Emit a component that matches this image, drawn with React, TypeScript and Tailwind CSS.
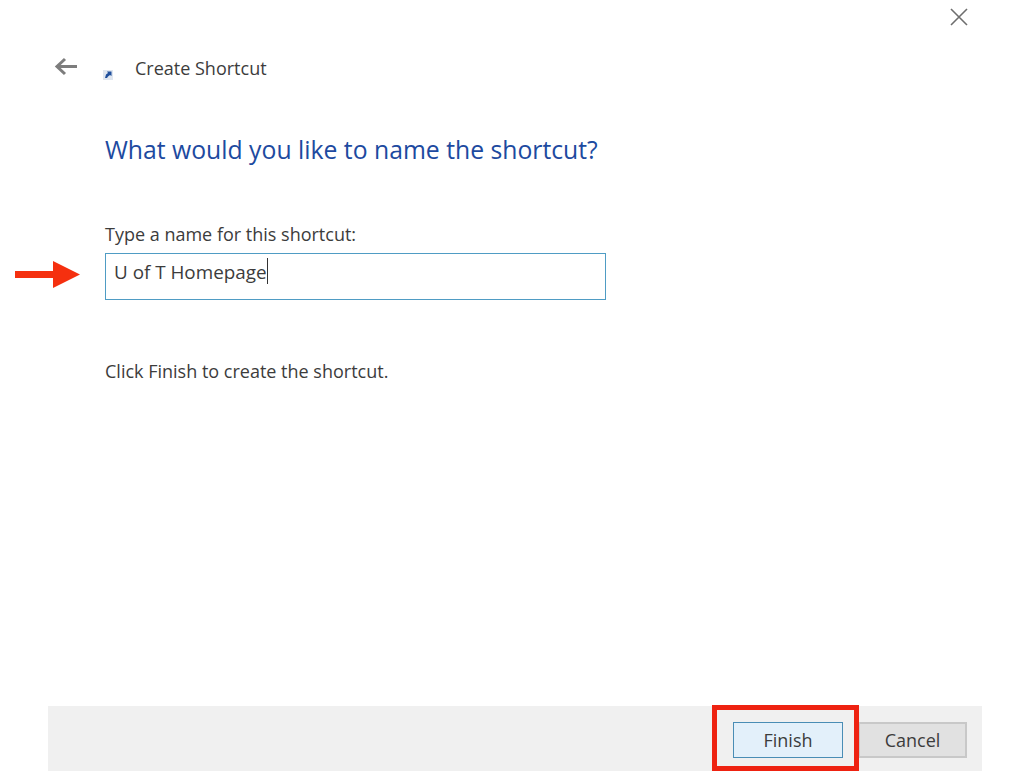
const App = () => {
  return (
    <div className="relative flex h-[782px] w-[1024px] flex-col overflow-hidden bg-white font-['Open_Sans',sans-serif] text-[#3c3c3c]">
      <div className="flex h-[35px] justify-end pr-[55px] pt-[6px]">
        <svg width="20" height="20" viewBox="0 0 20 20" fill="none" stroke="#6e6e6e" strokeWidth="1.6">
          <path d="M2 3 L18 19 M18 3 L2 19" />
        </svg>
      </div>

      <div className="flex h-[66px] items-center pl-[54px]">
        <svg className="mb-[2px]" width="24" height="20" viewBox="0 0 24 20" fill="none" stroke="#7d7d7d" strokeWidth="3">
          <path d="M23 9.5 H3 M11 2 L3 9.5 L11 17" />
        </svg>
        <svg className="ml-[25px] mt-[14px]" width="10" height="10" viewBox="0 0 10 10">
          <rect width="10" height="10" fill="#dfe6f0" />
          <path d="M2 8 L3 4.5 L5 3 L4 1.5 L8.5 1.5 L8.5 6 L7 5 L5 6.5 L4 8 Z" fill="#1f4f9c" />
        </svg>
        <span className="ml-[22px] text-[18px] leading-6">Create Shortcut</span>
      </div>

      <div className="flex flex-1 flex-col pl-[105px]">
        <h1 className="mt-[33px] text-[24.75px] font-normal leading-8 text-[#1d4aa0]">What would you like to name the shortcut?</h1>
        <label className="mt-[56px] text-[18px] leading-6">Type a name for this shortcut:</label>

        <div className="relative mt-[7px] flex h-[47px] w-[501px] items-start border border-[#4f9cc4] pl-2 pt-[6px]">
          <span className="text-[18.85px] leading-6">U of T Homepage</span>
          <span className="mt-[-2px] h-[26px] w-px bg-[#333]" />
          <svg className="absolute left-[-91px] top-[7px]" width="66" height="27" viewBox="0 0 66 27">
            <path d="M0 10 H38 V0 L65 13.5 L38 27 V17 H0 Z" fill="#f5300f" />
          </svg>
        </div>

        <p className="mt-[59px] text-[18px] leading-6">Click Finish to create the shortcut.</p>
      </div>

      <div className="mb-[11px] ml-[48px] mr-[42px] flex h-[65px] items-center justify-end gap-[15px] bg-[#f0f0f0] pr-[15px] pt-[3px]">
        <button className="h-[36px] w-[110px] border border-[#4a8db5] bg-[#e3f0fa] text-[18px] text-[#3c3c3c]">Finish</button>
        <button className="h-[36px] w-[109px] border-2 border-[#c8c8c8] bg-[#e1e1e1] text-[18px] text-[#3c3c3c]">Cancel</button>
      </div>

      <div className="absolute left-[712px] top-[705px] h-[66px] w-[147px] border-[5px] border-[#ee2211]" />
    </div>
  );
};

export default App;
